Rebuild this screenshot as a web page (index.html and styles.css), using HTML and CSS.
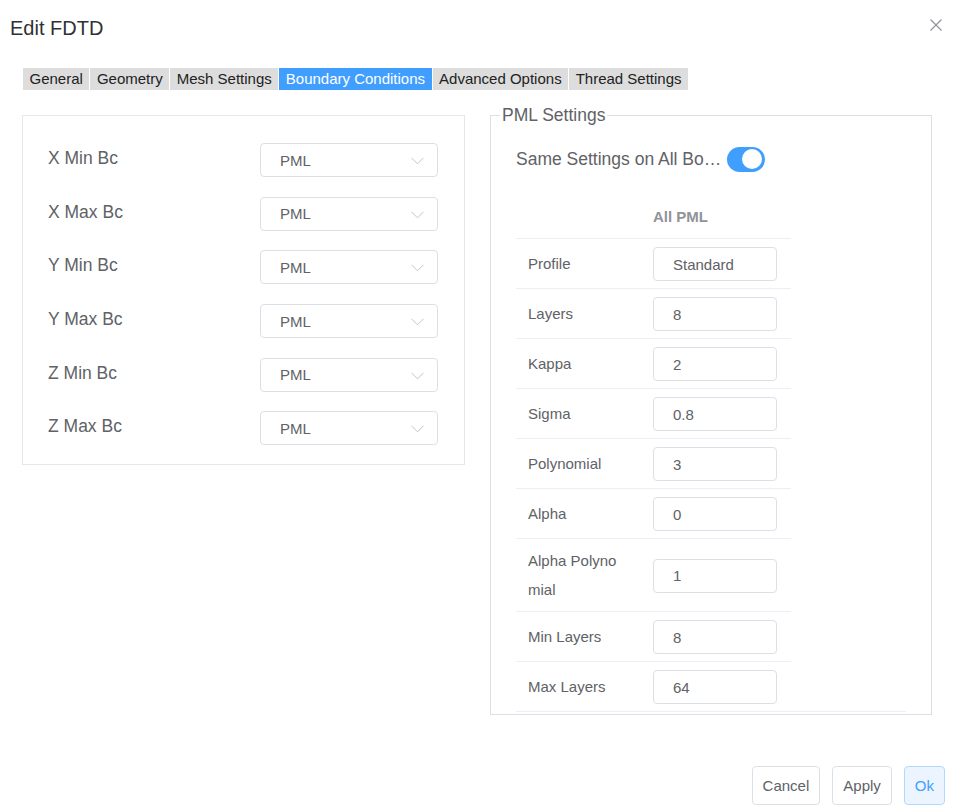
FILE: index.html
```html
<!DOCTYPE html>
<html lang="en">
<head>
<meta charset="utf-8">
<title>Edit FDTD</title>
<link rel="stylesheet" href="styles.css">
</head>
<body>
<div class="dialog">
  <header class="dialog-header">
    <h1 class="title">Edit FDTD</h1>
    <button class="close" aria-label="Close">
      <svg width="12" height="12" viewBox="0 0 12 12"><path d="M0.5 0.5 L11.5 11.5 M11.5 0.5 L0.5 11.5" stroke="#909399" stroke-width="1.2" fill="none"/></svg>
    </button>
  </header>

  <nav class="tabs">
    <span class="tab">General</span>
    <span class="tab">Geometry</span>
    <span class="tab">Mesh Settings</span>
    <span class="tab active">Boundary Conditions</span>
    <span class="tab">Advanced Options</span>
    <span class="tab">Thread Settings</span>
  </nav>

  <div class="content">
    <section class="bc-box">
      <div class="bc-row"><span class="bc-label">X Min Bc</span><div class="select"><span>PML</span><svg class="chev" width="13" height="8" viewBox="0 0 13 8"><path d="M0.5 0.8 L6.5 6.8 L12.5 0.8" stroke="#c0c4cc" stroke-width="1" fill="none"/></svg></div></div>
      <div class="bc-row"><span class="bc-label">X Max Bc</span><div class="select"><span>PML</span><svg class="chev" width="13" height="8" viewBox="0 0 13 8"><path d="M0.5 0.8 L6.5 6.8 L12.5 0.8" stroke="#c0c4cc" stroke-width="1" fill="none"/></svg></div></div>
      <div class="bc-row"><span class="bc-label">Y Min Bc</span><div class="select"><span>PML</span><svg class="chev" width="13" height="8" viewBox="0 0 13 8"><path d="M0.5 0.8 L6.5 6.8 L12.5 0.8" stroke="#c0c4cc" stroke-width="1" fill="none"/></svg></div></div>
      <div class="bc-row"><span class="bc-label">Y Max Bc</span><div class="select"><span>PML</span><svg class="chev" width="13" height="8" viewBox="0 0 13 8"><path d="M0.5 0.8 L6.5 6.8 L12.5 0.8" stroke="#c0c4cc" stroke-width="1" fill="none"/></svg></div></div>
      <div class="bc-row"><span class="bc-label">Z Min Bc</span><div class="select"><span>PML</span><svg class="chev" width="13" height="8" viewBox="0 0 13 8"><path d="M0.5 0.8 L6.5 6.8 L12.5 0.8" stroke="#c0c4cc" stroke-width="1" fill="none"/></svg></div></div>
      <div class="bc-row"><span class="bc-label">Z Max Bc</span><div class="select"><span>PML</span><svg class="chev" width="13" height="8" viewBox="0 0 13 8"><path d="M0.5 0.8 L6.5 6.8 L12.5 0.8" stroke="#c0c4cc" stroke-width="1" fill="none"/></svg></div></div>
    </section>

    <fieldset class="pml">
      <legend class="pml-legend">PML Settings</legend>
      <div class="pml-inner">
        <div class="switch-row">
          <span class="switch-label">Same Settings on All Boundaries</span>
          <span class="switch"><span class="knob"></span></span>
        </div>
        <div class="pml-table">
          <div class="trow head"><div class="cell-label"></div><div class="cell-head">All PML</div></div>
          <div class="trow"><div class="cell-label">Profile</div><div class="cell-input"><div class="input">Standard</div></div></div>
          <div class="trow"><div class="cell-label">Layers</div><div class="cell-input"><div class="input">8</div></div></div>
          <div class="trow"><div class="cell-label">Kappa</div><div class="cell-input"><div class="input">2</div></div></div>
          <div class="trow"><div class="cell-label">Sigma</div><div class="cell-input"><div class="input">0.8</div></div></div>
          <div class="trow"><div class="cell-label">Polynomial</div><div class="cell-input"><div class="input">3</div></div></div>
          <div class="trow"><div class="cell-label">Alpha</div><div class="cell-input"><div class="input">0</div></div></div>
          <div class="trow"><div class="cell-label">Alpha Polynomial</div><div class="cell-input"><div class="input">1</div></div></div>
          <div class="trow"><div class="cell-label">Min Layers</div><div class="cell-input"><div class="input">8</div></div></div>
          <div class="trow last"><div class="cell-label">Max Layers</div><div class="cell-input"><div class="input">64</div></div></div>
        </div>
      </div>
    </fieldset>
  </div>

  <footer class="footer">
    <button class="btn">Cancel</button>
    <button class="btn">Apply</button>
    <button class="btn primary">Ok</button>
  </footer>
</div>
</body>
</html>
```

FILE: styles.css
```css
* { box-sizing: border-box; }

html, body {
  margin: 0;
  padding: 0;
  background: #ffffff;
}

body {
  font-family: "Liberation Sans", Arial, sans-serif;
  color: #606266;
}

.dialog {
  width: 953px;
  height: 810px;
}

.dialog-header {
  display: flex;
  justify-content: space-between;
  align-items: flex-start;
  padding: 16px 11px 0 10px;
}

.title {
  margin: 0;
  font-size: 20px;
  line-height: 24px;
  font-weight: normal;
  color: #303133;
}

.close {
  margin-top: 3px;
  padding: 0;
  border: 0;
  background: none;
  width: 12px;
  height: 12px;
  display: block;
}
.close svg { display: block; }

.tabs {
  display: flex;
  gap: 1px;
  margin: 28px 0 0 23px;
}

.tab {
  background: #dddddd;
  color: #222222;
  font-size: 15px;
  height: 22px;
  line-height: 22px;
  padding: 0 6.5px;
  white-space: nowrap;
}

.tab.active {
  background: #409eff;
  color: #ffffff;
}

.content {
  display: flex;
  align-items: flex-start;
  gap: 25px;
  margin-top: 15px;
  padding-left: 22px;
}

.bc-box {
  width: 443px;
  margin-top: 10px;
  border: 1px solid #e4e7ed;
  padding: 27px 26px 19px 25px;
  display: flex;
  flex-direction: column;
  gap: 19.7px;
}

.bc-row {
  display: flex;
  align-items: center;
  justify-content: space-between;
  height: 34px;
}

.bc-label {
  font-size: 17.5px;
  line-height: 20px;
  color: #606266;
  margin-bottom: 4px;
}

.select {
  position: relative;
  width: 178px;
  height: 34px;
  border: 1px solid #dcdfe6;
  border-radius: 4px;
  padding: 0 19px;
  display: flex;
  align-items: center;
  font-size: 15px;
  color: #606266;
}

.chev {
  position: absolute;
  right: 13px;
  top: 13px;
}

.pml {
  width: 442px;
  margin: 0;
  border: 1px solid #dcdfe6;
  padding: 0 20px 2px 9px;
  min-width: 0;
}

.pml-legend {
  padding: 0 2px;
  font-size: 17.5px;
  line-height: 20px;
  color: #606266;
}

.pml-inner {
  margin-left: 16px;
}

.switch-row {
  display: flex;
  align-items: center;
  height: 26px;
  margin-top: 21px;
}

.switch-label {
  width: 211px;
  font-size: 17.5px;
  line-height: 20px;
  color: #606266;
  white-space: nowrap;
  overflow: hidden;
  text-overflow: ellipsis;
}

.switch {
  position: relative;
  width: 38px;
  height: 25px;
  border-radius: 13px;
  background: #409eff;
}

.knob {
  position: absolute;
  right: 3px;
  top: 2.5px;
  width: 20px;
  height: 20px;
  border-radius: 50%;
  background: #ffffff;
}

.pml-table {
  width: 390px;
  margin-top: 24px;
  border-bottom: 1px solid #ebeef5;
}

.trow {
  display: grid;
  grid-template-columns: 125px 150px;
  width: 275px;
  border-bottom: 1px solid #ebeef5;
  align-items: center;
}

.trow.last {
  border-bottom: 0;
}

.trow.head {
  height: 43px;
}

.cell-head {
  padding-left: 12px;
  font-size: 15px;
  font-weight: bold;
  color: #909399;
  line-height: 26px;
}

.cell-label {
  padding: 8px 16px 7px 12px;
  font-size: 15px;
  line-height: 28.5px;
  color: #606266;
  word-break: break-all;
}

.cell-input {
  padding: 8px 14px 7px 12px;
}

.input {
  width: 124px;
  height: 34px;
  border: 1px solid #dcdfe6;
  border-radius: 4px;
  padding: 0 19px;
  display: flex;
  align-items: center;
  font-size: 15px;
  color: #606266;
}

.footer {
  display: flex;
  justify-content: flex-end;
  gap: 12px;
  margin-top: 51px;
  padding-right: 8px;
}

.btn {
  height: 39px;
  padding: 0 10px;
  border: 1px solid #dcdfe6;
  border-radius: 4px;
  background: #ffffff;
  color: #606266;
  font-family: "Liberation Sans", Arial, sans-serif;
  font-size: 15px;
}

.btn.primary {
  background: #ecf5ff;
  border-color: #b3d8ff;
  color: #409eff;
}
```
